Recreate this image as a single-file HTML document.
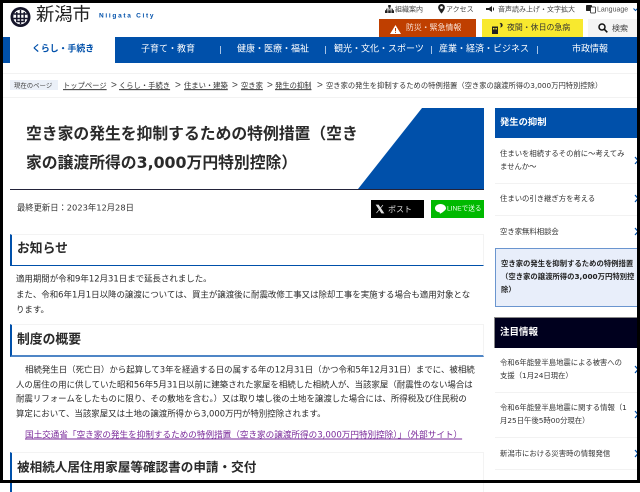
<!DOCTYPE html>
<html lang="ja"><head><meta charset="utf-8"><title>空き家の発生を抑制するための特例措置</title>
<style>
html,body{margin:0;padding:0}
body{width:640px;height:483px;overflow:hidden;position:relative;background:#fff;font-family:"DejaVu Sans","Noto Sans CJK JP",sans-serif;color:#333}
.t{position:absolute;white-space:nowrap;transform:translateY(calc(-50% + .8px));line-height:1}
.l{font-family:"Liberation Sans","Noto Sans CJK JP",sans-serif}
.b{position:absolute;box-sizing:border-box}
svg{position:absolute;overflow:visible}
.h{position:absolute;left:10px;width:474px;background:#fff;border:1px solid #f3f3f3;border-left:2px solid #0050aa;border-bottom:1px solid #0050aa;box-sizing:border-box}
.hb{border-bottom:2px solid #4f86c6}
.hd{font-size:12.8px;font-weight:bold;color:#2a2a2a}
.nav{color:#fff;font-size:9px}
.sep{position:absolute;width:1px;height:8px;top:46px;background:#a8c4e6}
.bc{font-size:7.3px;color:#333;text-decoration:underline}
.gt{font-size:10px;color:#444;font-family:"Liberation Sans",sans-serif}
.p{font-size:8.45px;color:#2a2a2a}
.s{font-size:7.35px;color:#333}
.ln{position:absolute;left:495px;width:142px;height:1px;background:#f2f2f2}
.ch{position:absolute;left:634.500px;width:3px;height:7px}
</style></head><body>

<!-- logo -->
<svg style="left:10px;top:7px" width="21" height="20" viewBox="0 0 21 20"><circle cx="10.500" cy="10" r="10" fill="#15152a"/><circle cx="10.500" cy="10" r="7.200" fill="#fff"/><path d="M4 7H17M3.500 11.500H17.500M10.500 3V17M6.800 5V14.500H14.200V5" fill="none" stroke="#15152a" stroke-width="1.400"/></svg>
<div class="t" style="left:36px;top:15px;font-size:18.300px;color:#222">新潟市</div>
<div class="t l" style="left:99px;top:16px;font-size:6.500px;font-weight:bold;letter-spacing:1.700px;color:#0050aa">Niigata City</div>

<!-- top links -->
<svg style="left:385px;top:5px" width="9" height="8" viewBox="0 0 9 8"><path d="M3.200 0H5.800V2.500H3.200ZM4.200 2.500H4.800V4H4.200ZM1 3.700H8V5.500H7.300V4.400H1.700V5.500H1ZM0 5.300H2.600V8H0ZM3.200 5.300H5.800V8H3.200ZM6.400 5.300H9V8H6.400Z" fill="#222"/></svg>
<div class="t" style="left:395px;top:8.500px;font-size:7px;color:#444">組織案内</div>
<svg style="left:438px;top:4px" width="7" height="10" viewBox="0 0 7 10"><path fill-rule="evenodd" d="M3.500 0A3.400 3.400 0 0 0 .1 3.400C.1 5.800 3.500 9.600 3.500 9.600S6.900 5.800 6.900 3.400A3.400 3.400 0 0 0 3.500 0ZM3.500 2.100A1.400 1.400 0 1 1 3.500 4.900 1.400 1.400 0 0 1 3.500 2.100Z" fill="#222"/></svg>
<div class="t" style="left:446px;top:8.500px;font-size:7px;color:#444">アクセス</div>
<svg style="left:486px;top:6px" width="9" height="6" viewBox="0 0 9 6"><path d="M0 2H3L6 0V6L3 4H0ZM7 1.500H8V4.500H7Z" fill="#222"/></svg>
<div class="t" style="left:498px;top:8.500px;font-size:7px;color:#444">音声読み上げ・文字拡大</div>
<svg style="left:586px;top:5px" width="10" height="8" viewBox="0 0 10 8"><rect x="0" y="0" width="6" height="6" rx=".8" fill="#222"/><rect x="4.500" y="2" width="5" height="6" rx=".8" fill="#fff" stroke="#222" stroke-width=".8"/></svg>
<div class="t l" style="left:597px;top:8.500px;font-size:7px;color:#555">Language</div>
<svg style="left:633px;top:8px" width="5" height="3" viewBox="0 0 5 3"><path d="M.5.500 2.500 2.500 4.500.500" fill="none" stroke="#0050aa" stroke-width="1"/></svg>

<!-- buttons -->
<div class="b" style="left:379px;top:19px;width:97px;height:18px;background:#bf3f00"></div>
<svg style="left:390px;top:25px" width="11" height="9" viewBox="0 0 11 9"><path fill-rule="evenodd" d="M5.500 0 11 9H0ZM5 3V6H6V3ZM5 6.800V7.900H6V6.800Z" fill="#fff"/></svg>
<div class="t" style="left:406px;top:27px;font-size:7.900px;color:#fbe4d8">防災・緊急情報</div>
<div class="b" style="left:482px;top:19px;width:101px;height:18px;background:#f8e92e"></div>
<svg style="left:492px;top:23px" width="11" height="11" viewBox="0 0 11 11"><path d="M0 3.500H6V11H0Z" fill="#222"/><rect x="1" y="5" width="1.500" height="1.500" fill="#f8e92e"/><rect x="3.400" y="5" width="1.500" height="1.500" fill="#f8e92e"/><path d="M7.500 0A2.300 2.300 0 1 1 8 4.400 2.800 2.800 0 0 0 7.500 0Z" fill="#222"/></svg>
<div class="t" style="left:507px;top:27px;font-size:7.900px;color:#333">夜間・休日の急病</div>
<div class="b" style="left:588px;top:19px;width:49px;height:18px;background:#f4f4f4"></div>
<svg style="left:598px;top:23px" width="10" height="10" viewBox="0 0 10 10"><circle cx="4" cy="4" r="3" fill="none" stroke="#111" stroke-width="1.500"/><path d="M6.200 6.200 9.300 9.300" stroke="#111" stroke-width="1.600"/></svg>
<div class="t" style="left:612px;top:27.500px;font-size:8px;color:#444">検索</div>

<!-- nav -->
<div class="b" style="left:0;top:37px;width:640px;height:26px;background:#0050aa"></div>
<div class="b" style="left:10px;top:37px;width:105px;height:26px;background:#fff"></div>
<div class="t nav" style="left:32px;top:49px;color:#0050aa;font-weight:bold;font-size:8.900px">くらし・手続き</div>
<div class="t nav" style="left:141px;top:49px">子育て・教育</div>
<div class="sep" style="left:220px"></div>
<div class="t nav" style="left:237px;top:49px">健康・医療・福祉</div>
<div class="sep" style="left:325px"></div>
<div class="t nav" style="left:334px;top:49px">観光・文化・スポーツ</div>
<div class="sep" style="left:431px"></div>
<div class="t nav" style="left:439px;top:49px">産業・経済・ビジネス</div>
<div class="sep" style="left:537px"></div>
<div class="t nav" style="left:572px;top:49px">市政情報</div>

<!-- breadcrumb -->
<div class="b" style="left:0;top:73px;width:640px;height:1px;background:#f2f2f2"></div>
<div class="b" style="left:0;top:97px;width:640px;height:1px;background:#f2f2f2"></div>
<div class="b" style="left:10px;top:80px;width:48px;height:10px;background:#ebf0f8"></div>
<div class="t" style="left:14px;top:84.500px;font-size:6.400px;color:#444">現在のページ</div>
<div class="t bc" style="left:63px;top:84.500px">トップページ</div><div class="t gt" style="left:111px;top:84.500px">&gt;</div>
<div class="t bc" style="left:119px;top:84.500px">くらし・手続き</div><div class="t gt" style="left:175px;top:84.500px">&gt;</div>
<div class="t bc" style="left:184px;top:84.500px">住まい・建築</div><div class="t gt" style="left:232px;top:84.500px">&gt;</div>
<div class="t bc" style="left:241px;top:84.500px">空き家</div><div class="t gt" style="left:267px;top:84.500px">&gt;</div>
<div class="t bc" style="left:275px;top:84.500px">発生の抑制</div><div class="t gt" style="left:317px;top:84.500px">&gt;</div>
<div class="t" style="left:326px;top:84.500px;font-size:7.300px;color:#333">空き家の発生を抑制するための特例措置（空き家の譲渡所得の3,000万円特別控除）</div>

<!-- title -->
<div class="b" style="left:10px;top:108px;width:474px;height:82px;border-bottom:1px solid #23233a"></div>
<svg style="left:10px;top:108px" width="474" height="82" viewBox="0 0 474 82"><path d="M348 81 412 0H474V81Z" fill="#0050aa"/></svg>
<div class="t" style="left:26px;top:133px;font-size:15.800px;font-weight:bold;color:#2a2a2a">空き家の発生を抑制するための特例措置（空き</div>
<div class="t" style="left:26px;top:162px;font-size:15.800px;font-weight:bold;color:#2a2a2a">家の譲渡所得の3,000万円特別控除）</div>

<div class="t" style="left:17px;top:207px;font-size:8.300px;color:#333">最終更新日：2023年12月28日</div>
<div class="b" style="left:371px;top:200px;width:53px;height:18px;background:#000"></div>
<svg style="left:376px;top:205px" width="8" height="8" viewBox="0 0 8 8"><path d="M.3 0H2.400L7.700 8H5.600ZM7 0 .5 8M1.300 .6" fill="#ddd" stroke="#ddd" stroke-width=".7"/></svg>
<div class="t" style="left:388px;top:208.500px;font-size:8px;color:#ddd">ポスト</div>
<div class="b" style="left:431px;top:200px;width:53px;height:18px;background:#00b900"></div>
<svg style="left:435px;top:204px" width="11" height="10" viewBox="0 0 11 10"><path d="M5.500 0C2.500 0 0 1.900 0 4.200 0 6.300 2 8 4.500 8.300 4.800 8.400 4.700 9.600 5 9.700 5.400 9.700 8.500 7.800 9.700 6.500 10.600 5.600 11 5 11 4.200 11 1.900 8.500 0 5.500 0Z" fill="#fff"/></svg>
<div class="t l" style="left:447px;top:209px;font-size:6.600px;color:#eaffea">LINEで送る</div>

<!-- headings & content -->
<div class="h" style="top:234px;height:32px"></div>
<div class="t hd" style="left:17px;top:248.500px">お知らせ</div>
<div class="t p" style="left:16px;top:277.500px">適用期間が令和9年12月31日まで延長されました。</div>
<div class="t p" style="left:16px;top:293.500px">また、令和6年1月1日以降の譲渡については、買主が譲渡後に耐震改修工事又は除却工事を実施する場合も適用対象とな</div>
<div class="t p" style="left:16px;top:309px">ります。</div>

<div class="h hb" style="top:324px;height:33px"></div>
<div class="t hd" style="left:17px;top:339.500px">制度の概要</div>
<div class="t p" style="left:25px;top:368.500px">相続発生日（死亡日）から起算して3年を経過する日の属する年の12月31日（かつ令和5年12月31日）までに、被相続</div>
<div class="t p" style="left:16px;top:383.500px">人の居住の用に供していた昭和56年5月31日以前に建築された家屋を相続した相続人が、当該家屋（耐震性のない場合は</div>
<div class="t p" style="left:16px;top:398px">耐震リフォームをしたものに限り、その敷地を含む。）又は取り壊し後の土地を譲渡した場合には、所得税及び住民税の</div>
<div class="t p" style="left:16px;top:412.500px">算定において、当該家屋又は土地の譲渡所得から3,000万円が特別控除されます。</div>
<div class="t" style="left:25px;top:434.500px;font-size:8.600px;color:#7a2a9a;text-decoration:underline">国土交通省「空き家の発生を抑制するための特例措置（空き家の譲渡所得の3,000万円特別控除）」（外部サイト）</div>

<div class="h" style="top:452px;height:40px;border-bottom:0"></div>
<div class="t" style="left:17px;top:466.500px;font-size:12.600px;font-weight:bold;color:#2a2a2a">被相続人居住用家屋等確認書の申請・交付</div>

<!-- sidebar -->
<div class="b" style="left:495px;top:108px;width:145px;height:30px;background:#0050aa"></div>
<div class="t" style="left:500px;top:121.500px;font-size:9.300px;font-weight:bold;color:#fff">発生の抑制</div>
<div class="t s" style="left:500px;top:153px">住まいを相続するその前に～考えてみ</div>
<div class="t s" style="left:500px;top:165.500px">ませんか～</div>
<div class="ln" style="top:183px"></div>
<div class="t s" style="left:500px;top:198px">住まいの引き継ぎ方を考える</div>
<div class="ln" style="top:215px"></div>
<div class="t s" style="left:500px;top:230.500px">空き家無料相談会</div>
<div class="b" style="left:495px;top:248px;width:145px;height:59px;background:#e8eefa;border:1px solid #6a95cf"></div>
<div class="t s" style="left:501px;top:263px;color:#222;font-weight:bold">空き家の発生を抑制するための特例措置</div>
<div class="t s" style="left:501px;top:276px;color:#222;font-weight:bold">（空き家の譲渡所得の3,000万円特別控</div>
<div class="t s" style="left:501px;top:289px;color:#222;font-weight:bold">除）</div>
<div class="b" style="left:494px;top:317px;width:146px;height:31px;background:#00001e;border-top:1px solid #888;border-left:1px solid #888"></div>
<div class="t" style="left:500px;top:331.500px;font-size:9.500px;font-weight:bold;color:#fff">注目情報</div>
<div class="t s" style="left:500px;top:361.500px">令和6年能登半島地震による被害への</div>
<div class="t s" style="left:500px;top:374.500px">支援（1月24日現在）</div>
<div class="ln" style="top:392px"></div>
<div class="t s" style="left:500px;top:407px">令和6年能登半島地震に関する情報（1</div>
<div class="t s" style="left:500px;top:420px">月25日午後5時00分現在）</div>
<div class="ln" style="top:437px"></div>
<div class="t s" style="left:500px;top:452.500px">新潟市における災害時の情報発信</div>
<div class="ln" style="top:469px"></div>

<svg class="ch" style="top:157px" viewBox="0 0 3 7"><path d="M0 0 3 3.500 0 7" fill="none" stroke="#0050aa" stroke-width="1.200"/></svg>
<svg class="ch" style="top:195px" viewBox="0 0 3 7"><path d="M0 0 3 3.500 0 7" fill="none" stroke="#0050aa" stroke-width="1.200"/></svg>
<svg class="ch" style="top:228px" viewBox="0 0 3 7"><path d="M0 0 3 3.500 0 7" fill="none" stroke="#0050aa" stroke-width="1.200"/></svg>
<svg class="ch" style="top:366px" viewBox="0 0 3 7"><path d="M0 0 3 3.500 0 7" fill="none" stroke="#0050aa" stroke-width="1.200"/></svg>
<svg class="ch" style="top:411px" viewBox="0 0 3 7"><path d="M0 0 3 3.500 0 7" fill="none" stroke="#0050aa" stroke-width="1.200"/></svg>
<svg class="ch" style="top:450px" viewBox="0 0 3 7"><path d="M0 0 3 3.500 0 7" fill="none" stroke="#0050aa" stroke-width="1.200"/></svg>

<!-- black frame -->
<div class="b" style="left:0;top:0;width:640px;height:3px;background:#000"></div>
<div class="b" style="left:0;top:480px;width:640px;height:3px;background:#000"></div>
<div class="b" style="left:0;top:0;width:3px;height:483px;background:#000"></div>
<div class="b" style="left:637px;top:0;width:3px;height:483px;background:#000"></div>
</body></html>
